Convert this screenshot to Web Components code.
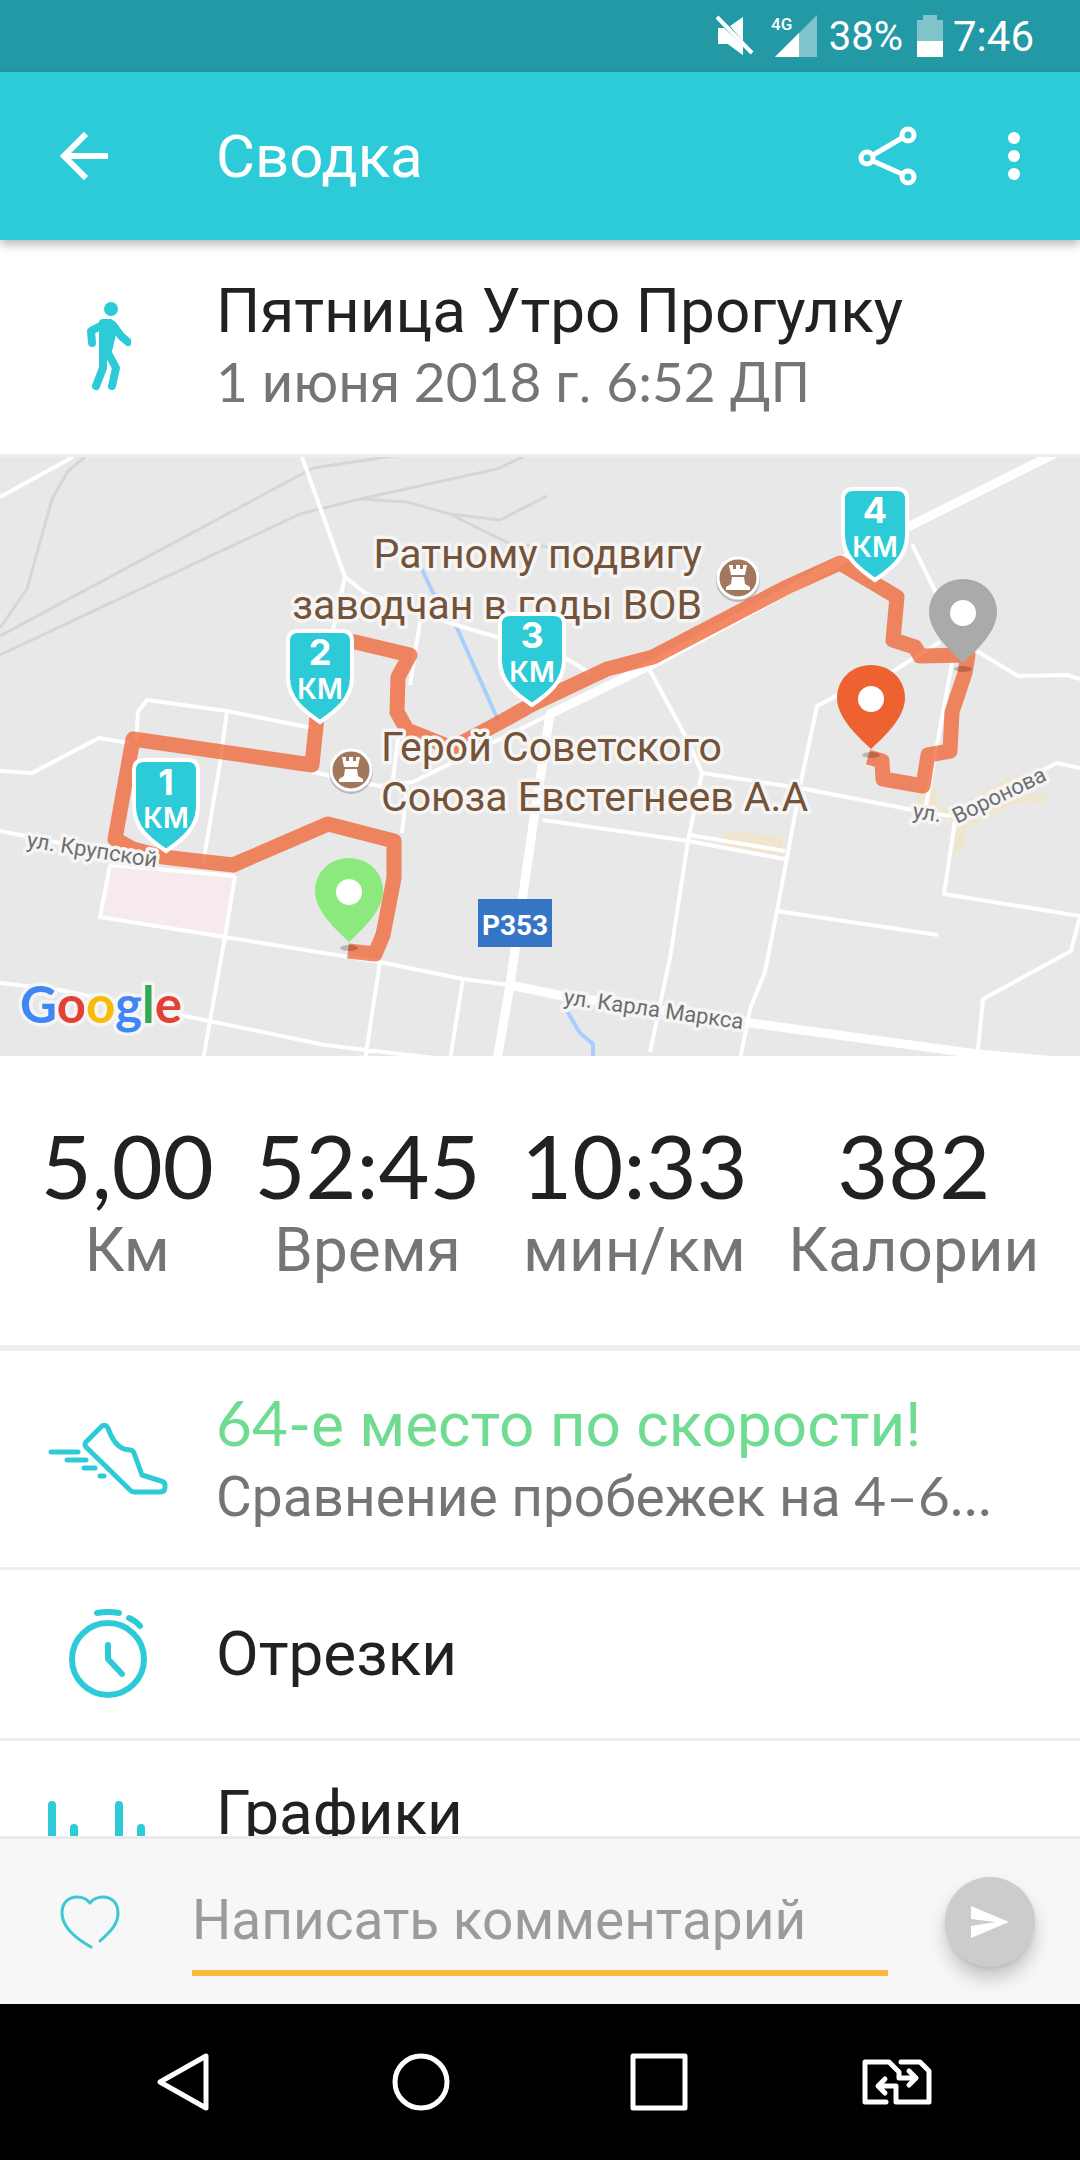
<!DOCTYPE html>
<html lang="ru">
<head>
<meta charset="utf-8">
<meta name="viewport" content="width=device-width, initial-scale=1">
<title>Сводка</title>
<style>
    body {
        margin: 0;
        height: 100vh;
        display: flex;
        flex-direction: column;
        background: #fff;
        color: #212121;
        font-family: Roboto, "Noto Sans", sans-serif;
        --accent: #2dcbd7;
        --accent-dark: #2499a6;
        --muted: #757575;
        --line: #eee;
    }

    main {
        flex: 1;
        min-height: 0;
        overflow: hidden;
    }

    .summary {
        --row-height: 217px;
    }

    .good {
        --title-color: #6fdc92;
    }
</style>
</head>
<body>

<template id="status-bar">
    <style>
        :host {
            display: flex;
            align-items: center;
            justify-content: flex-end;
            flex: none;
            height: 72px;
            padding-right: 46px;
            background: var(--accent-dark);
            color: #fff;
            font-size: 40px;
        }

        svg { display: block; fill: #fff; }
        .mute { margin-right: 16px; }
        .signal { margin-right: 12px; }
        .battery { margin: 0 10px 0 14px; }
        .time { font-size: 42px; }
        .dim { fill-opacity: .42; }
        text { font: 500 17px Roboto, sans-serif; }
    </style>
    <svg class="mute" width="40" height="42" viewBox="0 0 40 42">
        <path d="M15 11 28 2V26zM3 13 28 37V40L13 29H3z"/>
        <path d="M3 13H9L28 31V40L13 29H3z"/>
        <path d="M2 2 37 38" stroke="#fff" stroke-width="4"/>
    </svg>
    <svg class="signal" width="46" height="42" viewBox="0 0 46 42">
        <path class="dim" d="M46 0V42H4z"/>
        <path d="M28 18V42H4z"/>
        <text x="0" y="15">4G</text>
    </svg>
    <span>38%</span>
    <svg class="battery" width="26" height="42" viewBox="0 0 26 42">
        <path class="dim" d="M6 0H20V5H26V26H0V5H6z"/>
        <path d="M0 26H26V42H0z"/>
    </svg>
    <span class="time">7:46</span>
</template>

<template id="app-bar">
    <style>
        :host {
            display: flex;
            align-items: center;
            flex: none;
            height: 168px;
            background: var(--accent);
            color: #fff;
            box-shadow: 0 4px 10px rgba(0, 0, 0, .3);
            position: relative;
            z-index: 1;
        }

        button {
            display: flex;
            align-items: center;
            justify-content: center;
            height: 100%;
            padding: 0;
            border: 0;
            background: none;
            color: inherit;
        }

        h1 {
            flex: 1;
            margin: 0;
            font-size: 60px;
            font-weight: 400;
        }

        svg { fill: none; stroke: currentColor; }
        .back { width: 168px; margin-right: 48px; }
        .share { width: 120px; }
        .more { width: 132px; }
        .more svg { fill: currentColor; stroke: none; }
    </style>
    <button class="back" aria-label="Назад">
        <svg width="48" height="48" viewBox="0 0 48 48" stroke-width="6">
            <path d="M48 24H5M26 2 4 24 26 46"/>
        </svg>
    </button>
    <h1><slot></slot></h1>
    <button class="share" aria-label="Поделиться">
        <svg width="60" height="60" viewBox="0 0 60 60" stroke-width="5">
            <circle cx="9" cy="32" r="6"/>
            <circle cx="50" cy="9" r="6"/>
            <circle cx="50" cy="51" r="6"/>
            <path d="M15 29 44 12M15 35 44 48"/>
        </svg>
    </button>
    <button class="more" aria-label="Ещё">
        <svg width="12" height="48" viewBox="0 0 12 48">
            <circle cx="6" cy="6" r="6"/>
            <circle cx="6" cy="24" r="6"/>
            <circle cx="6" cy="42" r="6"/>
        </svg>
    </button>
</template>

<!-- no whitespace round the slot: it would show up between the digits and the word -->
<template id="app-num"><style>
        :host {
            display: inline;
            font-family: Lato, Roboto, sans-serif;
        }
    </style><slot></slot></template>

<template id="list-row">
    <style>
        :host {
            display: flex;
            align-items: center;
            box-sizing: border-box;
            min-height: 171px;
            border-bottom: 3px solid var(--line);
        }

        :host([lines="2"]) { min-height: var(--row-height, 219px); }

        .icon {
            flex: none;
            display: flex;
            justify-content: center;
            width: 216px;
        }

        .text {
            flex: 1;
            min-width: 0;
            padding-right: 48px;
        }

        :host([lines="2"]) .text { padding-bottom: 4px; }

        .title, .sub {
            overflow: hidden;
            white-space: nowrap;
            text-overflow: ellipsis;
        }

        .title {
            color: var(--title-color, inherit);
            font-size: 62px;
            line-height: 72px;
        }

        .sub {
            display: none;
            height: 68px;
            color: var(--muted);
            font-size: 55px;
            line-height: 68px;
        }

        :host([lines="2"]) .sub { display: block; }

        ::slotted(a) { color: inherit; text-decoration: none; }

        ::slotted(svg) {
            fill: none;
            stroke: var(--accent);
            stroke-linecap: round;
            stroke-linejoin: round;
        }
    </style>
    <div class="icon"><slot name="icon"></slot></div>
    <div class="text">
        <div class="title"><slot></slot></div>
        <div class="sub"><slot name="sub"></slot></div>
    </div>
</template>

<template id="route-map">
    <style>
        :host { display: block; }
        svg { display: block; width: 100%; height: auto; background: #e8e8e8; }
        .road, .rail, .water, .track { fill: none; stroke-linejoin: round; }
        .road { stroke: #fff; stroke-width: 4; }
        .main { stroke-width: 9; }
        .rail { stroke: #d6d6d6; stroke-width: 3; }
        .water { stroke: #a8cffb; stroke-width: 4; }
        .track { stroke: #f06030; stroke-width: 15; opacity: .74; }
        text { font-family: Roboto, "Noto Sans", sans-serif; }
        .poi { font-size: 41px; fill: #755338; }
        .street { font-size: 22px; fill: #6e6e6e; }
        .poi, .street, .google { stroke: #f5f5f5; stroke-width: 7; stroke-linejoin: round; paint-order: stroke; }
        .end { text-anchor: end; }
        .mid { text-anchor: middle; }
        .google { font-family: Lato, sans-serif; font-size: 51px; font-weight: 700; }
        .sign { font-size: 28px; font-weight: 700; fill: #fff; }
        .km { font-family: Inter, sans-serif; font-size: 28px; font-weight: 600; fill: #fff; }
        .num { font-family: Inter, sans-serif; font-size: 36px; font-weight: 700; fill: #fff; }
    </style>
    <svg viewBox="0 0 1080 599" role="img" aria-label="Карта маршрута">
        <defs>
            <g id="shield">
                <path d="M-22 2H22Q32 2 32 12V48C32 70 16 82 0 93C-16 82 -32 70 -32 48V12Q-32 2 -22 2z" fill="#2dcbd7" stroke="#fff" stroke-width="4"/>
            </g>
            <g id="pin">
                <ellipse cx="0" cy="90" rx="9" ry="3" fill="#000" fill-opacity=".22"/>
                <path fill="currentColor" d="M0 84C-15 70 -34 52 -34 33C-34 14 -19 0 0 0S34 14 34 33C34 52 15 70 0 84z"/>
                <circle cx="0" cy="34" r="13" fill="#fff"/>
            </g>
            <g id="tower">
                <circle cx="0" cy="2" r="22" fill="#000" fill-opacity=".2"/>
                <circle r="20" fill="#a1785c" stroke="#fff" stroke-width="3"/>
                <path fill="#fff" d="M-9 -13H-5V-9H-2V-13H2V-9H5V-13H9L7 -3H-7zM-6 -1H6L7 6 12 9V12H-12V9L-7 6z"/>
            </g>
        </defs>

        <path fill="#f6eaed" d="M110 408 235 419 225 480 100 460z"/>
        <path fill="#f0e6cf" d="M725 374 783 380 782 402 722 392zM918 331 937 333 938 349 952 353 1013 318 1017 337 1047 337 1045 347 1020 345 967 370 963 396 954 394 955 365 917 351z"/>

        <path class="rail" d="M85 0 68 14 52 42 27 132 0 171M0 179 313 11 400 -2M0 198 300 57 360 42 497 12 523 0M360 42 407 45 450 57 510 87 553 90M450 57 500 63 547 39"/>
        <path class="water" d="M420 108 432 134 457 171 498 263M567 554 580 576 593 587V603"/>

        <path class="road" d="M0 40 73 0M302 0 345 120 365 136 453 167 500 181 567 202 590 216M345 120 333 173
            M0 314 32 316 99 281 130 286M136 284 138 255 147 243 227 254 312 271M227 254 220 306 203 407
            M312 315 380 329 413 325 547 259M420 165 410 228M398 282 393 322M407 330 402 376
            M543 363 688 384 785 402M690 378 785 394M0 374 70 388 115 397
            M110 408 100 460 380 505 463 522 510 528M235 419 225 480 203 603M110 408 235 419
            M0 526 60 533 190 560 325 588 400 597 453 603M380 505 365 603M463 522 450 603
            M648 210 687 282 702 316 688 384 670 501 650 595M702 316 800 331 913 353 950 359
            M912 87 937 138M940 185 890 216 840 237 817 249 802 320 777 454 765 515 750 552 740 603
            M977 194 1018 219 1067 218 1080 222M952 206 928 337 925 355M950 359 1057 306 1080 311
            M955 364 944 437 1080 459 1071 494 983 542 977 603M777 454 938 478"/>
        <path class="road main" d="M497 603 510 528 533 368 550 257 653 207 787 134 840 104 910 69 1060 -6M510 528 563 539 750 566 977 597 1080 606"/>

        <path class="track" d="M348 494 375 497 383 478 394 421V384L328 367 233 408 163 400 133 392 115 382 133 282 312 308 325 182 355 185 410 198 398 220 397 255 407 273 452 291 497 267 533 247 607 212 653 200 787 130 840 106 897 140 893 183 915 190 920 199 968 198 965 216 952 255 950 294 928 298 923 329 883 322 882 304 868 300"/>

        <text class="poi end" x="702" y="111">Ратному подвигу</text>
        <text class="poi end" x="702" y="162">заводчан в годы ВОВ</text>
        <text class="poi" x="381" y="304">Герой Советского</text>
        <text class="poi" x="381" y="354">Союза Евстегнеев А.А</text>
        <use href="#tower" x="738" y="121"/>
        <use href="#tower" x="351" y="313"/>

        <text class="street" transform="translate(26 390) rotate(9)">ул. Крупской</text>
        <text class="street" transform="translate(563 547) rotate(8)">ул. Карла Маркса</text>
        <text class="street" transform="translate(912 361) rotate(8)">ул.</text>
        <text class="street" transform="translate(957 367) rotate(-26)">Воронова</text>

        <rect x="478" y="442" width="74" height="48" fill="#3575c5"/>
        <text class="sign mid" x="515" y="478">Р353</text>

        <use href="#shield" x="166" y="301"/>
        <text class="num mid" x="166" y="338">1</text>
        <text class="km mid" x="166" y="371">КМ</text>
        <use href="#shield" x="320" y="172"/>
        <text class="num mid" x="320" y="208">2</text>
        <text class="km mid" x="320" y="242">КМ</text>
        <use href="#shield" x="532" y="155"/>
        <text class="num mid" x="532" y="191">3</text>
        <text class="km mid" x="532" y="225">КМ</text>
        <use href="#shield" x="875" y="30"/>
        <text class="num mid" x="875" y="66">4</text>
        <text class="km mid" x="875" y="100">КМ</text>

        <use href="#pin" x="349" y="401" color="#8ce97d"/>
        <use href="#pin" x="963" y="122" color="#aaa"/>
        <use href="#pin" x="871" y="208" color="#ee6130"/>

        <text class="google" x="20" y="566"><tspan fill="#4285f4">G</tspan><tspan fill="#e34133">o</tspan><tspan fill="#f9bb05">o</tspan><tspan fill="#4285f4">g</tspan><tspan fill="#34a853">l</tspan><tspan fill="#e34133">e</tspan></text>
    </svg>
</template>

<template id="stat-strip">
    <style>
        :host {
            display: flex;
            justify-content: space-evenly;
            box-sizing: border-box;
            height: 295px;
            padding-top: 55px;
            border-bottom: 6px solid var(--line);
        }
    </style>
    <slot></slot>
</template>

<template id="stat-cell">
    <style>
        :host { display: block; text-align: center; }
        .value { font: 400 88px/108px Lato, Roboto, sans-serif; }
        .label { color: var(--muted); font-size: 62px; line-height: 62px; }
    </style>
    <div class="value"><slot></slot></div>
    <div class="label"><slot name="label"></slot></div>
</template>

<template id="comment-bar">
    <style>
        :host {
            display: flex;
            align-items: center;
            flex: none;
            box-sizing: border-box;
            height: 168px;
            border-top: 3px solid #ebebeb;
            background: #f7f7f7;
        }

        button {
            display: flex;
            align-items: center;
            justify-content: center;
            padding: 0;
            border: 0;
            background: none;
        }

        .like { width: 180px; height: 100%; }

        input {
            flex: 1;
            min-width: 0;
            box-sizing: border-box;
            height: 106px;
            align-self: flex-end;
            margin: 0 57px 28px 12px;
            padding: 0;
            border: 0;
            border-bottom: 6px solid #fcb83c;
            border-radius: 0;
            background: none;
            outline: 0;
            color: inherit;
            font: 400 55px Roboto, sans-serif;
        }

        input::placeholder { color: #9b9b9b; }

        .send {
            width: 90px;
            height: 90px;
            margin-right: 45px;
            border-radius: 50%;
            background: #ccc;
            box-shadow: 0 12px 18px rgba(0, 0, 0, .2), 0 2px 4px rgba(0, 0, 0, .08);
        }
    </style>
    <button class="like" aria-label="Нравится">
        <svg width="60" height="54" viewBox="0 0 60 54" fill="none" stroke="#3bc8d3" stroke-width="3" stroke-linecap="round" stroke-linejoin="round">
            <path d="M31 52C15 43 2 31 2 18C2 8 8 2 17 2C23 2 27 4 30 8C33 4 37 2 43 2C52 2 58 8 58 18C58 29 51 36 40 46"/>
        </svg>
    </button>
    <input type="text" placeholder="Написать комментарий" aria-label="Написать комментарий">
    <button class="send" aria-label="Отправить">
        <svg width="38" height="32" viewBox="0 0 38 32" fill="#fff">
            <path d="M0 0 38 16 0 32V20L25 16 0 13z"/>
        </svg>
    </button>
</template>

<template id="nav-bar">
    <style>
        :host {
            display: flex;
            flex: none;
            height: 156px;
            padding: 0 64px;
            background: #000;
        }

        button {
            flex: 1;
            display: flex;
            align-items: center;
            justify-content: center;
            padding: 0;
            border: 0;
            background: none;
        }

        svg { fill: none; stroke: #fff; stroke-width: 5; stroke-linecap: round; stroke-linejoin: round; }
    </style>
    <button aria-label="Назад">
        <svg width="52" height="58" viewBox="0 0 52 58"><path d="M49 3V55L3 29z"/></svg>
    </button>
    <button aria-label="Домой">
        <svg width="58" height="58" viewBox="0 0 58 58"><circle cx="29" cy="29" r="26"/></svg>
    </button>
    <button aria-label="Недавние">
        <svg width="58" height="58" viewBox="0 0 58 58"><path d="M3 3H55V55H3z"/></svg>
    </button>
    <button aria-label="Сменить SIM">
        <svg width="70" height="46" viewBox="0 0 70 46">
            <path d="M24 43H3V3H27L37 13V19H53M47 12 54 19 47 26M39 3H58L67 12V43H34V27H17M23 20 16 27 23 34"/>
        </svg>
    </button>
</template>

<status-bar></status-bar>
<app-bar>Сводка</app-bar>
<main>
    <list-row lines="2" class="summary">
        <svg slot="icon" width="46" height="90" viewBox="-2 1 46 90" stroke-width="8">
            <circle cx="24" cy="8" r="7" fill="#2dcbd7" stroke="none"/>
            <path d="M5 42 4 30 19 22M26 24 34 35 41 41M16 48V67L9 85M20 50 29 67 25 85"/>
            <path d="M16 22H23L25 33 21 50H16z" fill="#2dcbd7"/>
        </svg>
        Пятница Утро Прогулку
        <span slot="sub"><app-num>1</app-num> июня <app-num>2018</app-num> г. <app-num>6:52</app-num> ДП</span>
    </list-row>
    <route-map></route-map>
    <stat-strip>
        <stat-cell>5,00<span slot="label">Км</span></stat-cell>
        <stat-cell>52:45<span slot="label">Время</span></stat-cell>
        <stat-cell>10:33<span slot="label">мин/км</span></stat-cell>
        <stat-cell>382<span slot="label">Калории</span></stat-cell>
    </stat-strip>
    <list-row lines="2" class="good">
        <svg slot="icon" width="120" height="72" viewBox="0 0 120 72" stroke-width="5">
            <path d="M53 4 38 19Q36 21 38 24L82 67Q84 69 86 69H112Q117 69 117 64V62Q117 59 113 58L94 52 86 30Q85 27 82 27L76 26C68 23 63 14 60 5Q57 0 53 4z"/>
            <path d="M3 29H30M19 37H38M36 45H47M52 53H56"/>
        </svg>
        <a href="#rank"><app-num>64-</app-num>е место по скорости!</a>
        <span slot="sub">Сравнение пробежек на <app-num>4–6…</app-num></span>
    </list-row>
    <list-row>
        <svg slot="icon" width="80" height="90" viewBox="0 0 80 90" stroke-width="6">
            <circle cx="40" cy="50" r="36"/>
            <path d="M29 4Q40 2 51 4M61 9Q68 12 72 17M40 36V50L54 65"/>
        </svg>
        <a href="#splits">Отрезки</a>
    </list-row>
    <list-row lines="2">
        <svg slot="icon" width="120" height="96" viewBox="0 0 120 96" stroke-width="8">
            <path d="M4 4V92M26 27V92M71 4V92M93 27V92"/>
        </svg>
        <a href="#charts">Графики</a>
    </list-row>
</main>
<comment-bar></comment-bar>
<nav-bar></nav-bar>

<script>
    (function () {
        // every element only needs its template cloned into a shadow root
        const tags = [
            'status-bar', 'app-bar', 'app-num', 'list-row', 'route-map',
            'stat-strip', 'stat-cell', 'comment-bar', 'nav-bar'
        ];

        tags.forEach((tag) => {
            const template = document.getElementById(tag);

            customElements.define(tag, class extends HTMLElement {
                constructor() {
                    super();
                    this.attachShadow({mode: 'open'})
                        .appendChild(template.content.cloneNode(true));
                }
            });
        });
    }());
</script>
</body>
</html>
